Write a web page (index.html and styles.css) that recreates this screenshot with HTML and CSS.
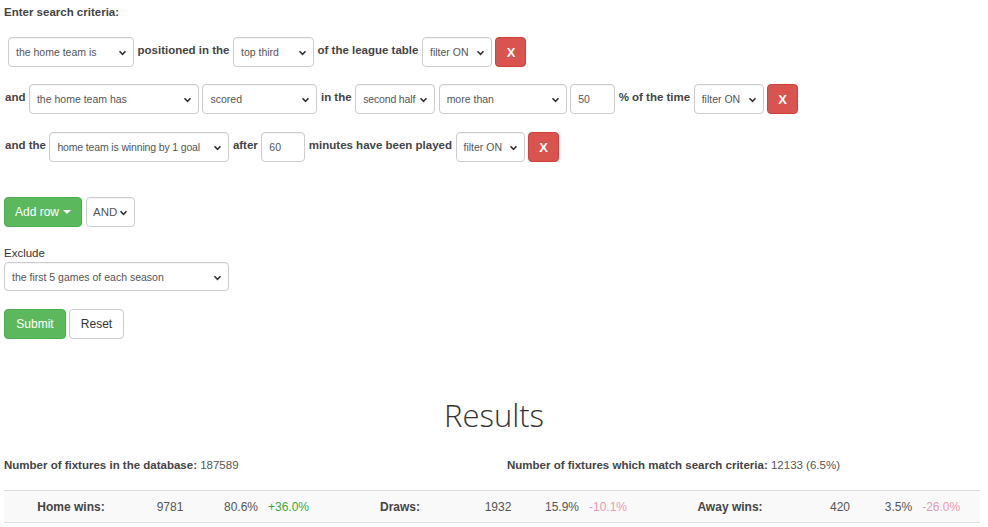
FILE: index.html
```html
<!DOCTYPE html>
<html>
<head>
<meta charset="utf-8">
<link rel="stylesheet" href="styles.css">
</head>
<body>
<div class="page">
  <div class="title">Enter search criteria:</div>

  <div class="crit-row r1">
    <span class="sel w125">the home team is<svg class="chev" viewBox="0 0 10 7"><path d="M1.5 1.5 L5 5 L8.5 1.5"/></svg></span>
    <span class="lbl">positioned in the</span>
    <span class="sel w83">top third<svg class="chev" viewBox="0 0 10 7"><path d="M1.5 1.5 L5 5 L8.5 1.5"/></svg></span>
    <span class="lbl">of the league table</span>
    <span class="sel w70">filter ON<svg class="chev" viewBox="0 0 10 7"><path d="M1.5 1.5 L5 5 L8.5 1.5"/></svg></span>
    <span class="btn-x">X</span>
  </div>

  <div class="crit-row r2">
    <span class="lbl">and</span>
    <span class="sel w169">the home team has<svg class="chev" viewBox="0 0 10 7"><path d="M1.5 1.5 L5 5 L8.5 1.5"/></svg></span>
    <span class="sel w115">scored<svg class="chev" viewBox="0 0 10 7"><path d="M1.5 1.5 L5 5 L8.5 1.5"/></svg></span>
    <span class="lbl">in the</span>
    <span class="sel w80 tight">second half<svg class="chev" viewBox="0 0 10 7"><path d="M1.5 1.5 L5 5 L8.5 1.5"/></svg></span>
    <span class="sel w128">more than<svg class="chev" viewBox="0 0 10 7"><path d="M1.5 1.5 L5 5 L8.5 1.5"/></svg></span>
    <span class="inp w45">50</span>
    <span class="lbl">% of the time</span>
    <span class="sel w70">filter ON<svg class="chev" viewBox="0 0 10 7"><path d="M1.5 1.5 L5 5 L8.5 1.5"/></svg></span>
    <span class="btn-x">X</span>
  </div>

  <div class="crit-row r3">
    <span class="lbl">and the</span>
    <span class="sel w180 tight">home team is winning by 1 goal<svg class="chev" viewBox="0 0 10 7"><path d="M1.5 1.5 L5 5 L8.5 1.5"/></svg></span>
    <span class="lbl">after</span>
    <span class="inp w44">60</span>
    <span class="lbl">minutes have been played</span>
    <span class="sel w69">filter ON<svg class="chev" viewBox="0 0 10 7"><path d="M1.5 1.5 L5 5 L8.5 1.5"/></svg></span>
    <span class="btn-x">X</span>
  </div>

  <div class="add-row">
    <span class="btn green addbtn">Add row <span class="caret"></span></span>
    <span class="sel w49 and">AND<svg class="chev" viewBox="0 0 10 7"><path d="M1.5 1.5 L5 5 L8.5 1.5"/></svg></span>
  </div>

  <div class="exclude-label">Exclude</div>
  <span class="sel w224 excl">the first 5 games of each season<svg class="chev" viewBox="0 0 10 7"><path d="M1.5 1.5 L5 5 L8.5 1.5"/></svg></span>

  <div class="actions">
    <span class="btn green submit">Submit</span>
    <span class="btn plain">Reset</span>
  </div>

  <h1 class="results">Results</h1>

  <div class="counts">
    <div><b>Number of fixtures in the database:</b> 187589</div>
    <div class="right"><b>Number of fixtures which match search criteria:</b> 12133 (6.5%)</div>
  </div>

  <div class="stats">
    <span class="c lab">Home wins:</span>
    <span class="c">9781</span>
    <span class="c">80.6%&nbsp;&nbsp; <span class="pos">+36.0%</span></span>
    <span class="c lab">Draws:</span>
    <span class="c">1932</span>
    <span class="c">15.9%&nbsp;&nbsp; <span class="neg">-10.1%</span></span>
    <span class="c lab">Away wins:</span>
    <span class="c">420</span>
    <span class="c">3.5%&nbsp;&nbsp; <span class="neg">-26.0%</span></span>
  </div>
</div>
</body>
</html>
```

FILE: styles.css
```css
* { box-sizing: border-box; }
html, body { margin: 0; padding: 0; background: #fff; }
body {
  font-family: "Liberation Sans", Arial, sans-serif;
  font-size: 11.5px;
  color: #333;
}
.page { padding: 0 4px; display: flex; flex-direction: column; align-items: flex-start; }
.title { font-weight: bold; color: #444; margin-top: 5px; font-size: 11.5px; line-height: 14px; }

.crit-row { display: flex; align-items: center; gap: 3.5px; height: 30px; }
.r1 { margin-top: 18px; padding-left: 4px; }
.r2 { margin-top: 17px; padding-left: 1px; }
.r3 { margin-top: 18px; padding-left: 1px; }
.lbl { font-weight: bold; color: #444; position: relative; top: -2px; }

.sel, .inp {
  display: inline-flex;
  align-items: center;
  height: 30px;
  border: 1px solid #ccc;
  border-radius: 4px;
  background: #fff;
  color: #555;
  font-size: 10.5px;
  padding-left: 7px;
  position: relative;
  box-shadow: inset 0 1px 1px rgba(0,0,0,0.05);
  white-space: nowrap;
}
.tight { letter-spacing: -0.15px; }
.chev {
  position: absolute;
  right: 6px;
  top: 12px;
  width: 9px;
  height: 6px;
  fill: none;
  stroke: #333;
  stroke-width: 1.9;
}
.w125 { width: 126px; }
.w83 { width: 81px; }
.w70 { width: 70px; }
.w169 { width: 170px; }
.w115 { width: 115px; }
.w80 { width: 80px; }
.w128 { width: 128px; }
.w45 { width: 45px; }
.w44 { width: 44px; }
.w180 { width: 180px; }
.w69 { width: 69px; }
.w49 { width: 49px; }
.w224 { width: 225px; }

.btn-x {
  display: inline-flex;
  align-items: center;
  justify-content: center;
  width: 31px;
  height: 30px;
  background: #d9534f;
  border: 1px solid #d43f3a;
  border-radius: 4px;
  color: #fff;
  font-weight: bold;
  font-size: 13px;
}

.add-row { display: flex; gap: 4px; margin-top: 35px; }
.btn {
  display: inline-flex;
  align-items: center;
  justify-content: center;
  height: 30px;
  border-radius: 4px;
  font-size: 12px;
  border: 1px solid transparent;
}
.green { background: #5cb85c; border-color: #4cae4c; color: #fff; }
.plain { background: #fff; border-color: #ccc; color: #333; width: 55px; }
.addbtn { width: 78px; }
.and { font-size: 11.5px; padding-left: 6px; }
.caret {
  display: inline-block;
  width: 0; height: 0;
  margin-left: 4px;
  border-top: 4px solid #fff;
  border-left: 4px solid transparent;
  border-right: 4px solid transparent;
}
.exclude-label { margin-top: 19px; font-size: 11.5px; color: #333; line-height: 14px; }
.excl { margin-top: 2px; height: 29px; font-size: 10.5px; }
.actions { display: flex; gap: 3px; margin-top: 18px; }
.submit { width: 62px; }

.results {
  align-self: stretch;
  text-align: center;
  font-family: "Open Sans", sans-serif;
  font-weight: 300;
  font-size: 31px;
  color: #333;
  margin: 54px 0 0;
  line-height: 44px;
}
.counts {
  align-self: stretch;
  display: grid;
  grid-template-columns: 503px 1fr;
  margin-top: 22px;
  color: #555;
  font-size: 11.5px;
}
.counts b { color: #444; }
.stats {
  align-self: stretch;
  display: grid;
  grid-template-columns: 134px 64px 129px 138px 58px 118px 170px 50px 115px;
  width: 976px;
  height: 33px;
  margin-top: 19px;
  background: #f9f9f9;
  border-top: 1px solid #ddd;
  border-bottom: 1px solid #ddd;
  align-items: center;
  color: #555;
  font-size: 12px;
}
.c { text-align: center; }
.lab { font-weight: bold; color: #444; }
.pos { color: #3aa83a; }
.neg { color: #e79aae; }
```
